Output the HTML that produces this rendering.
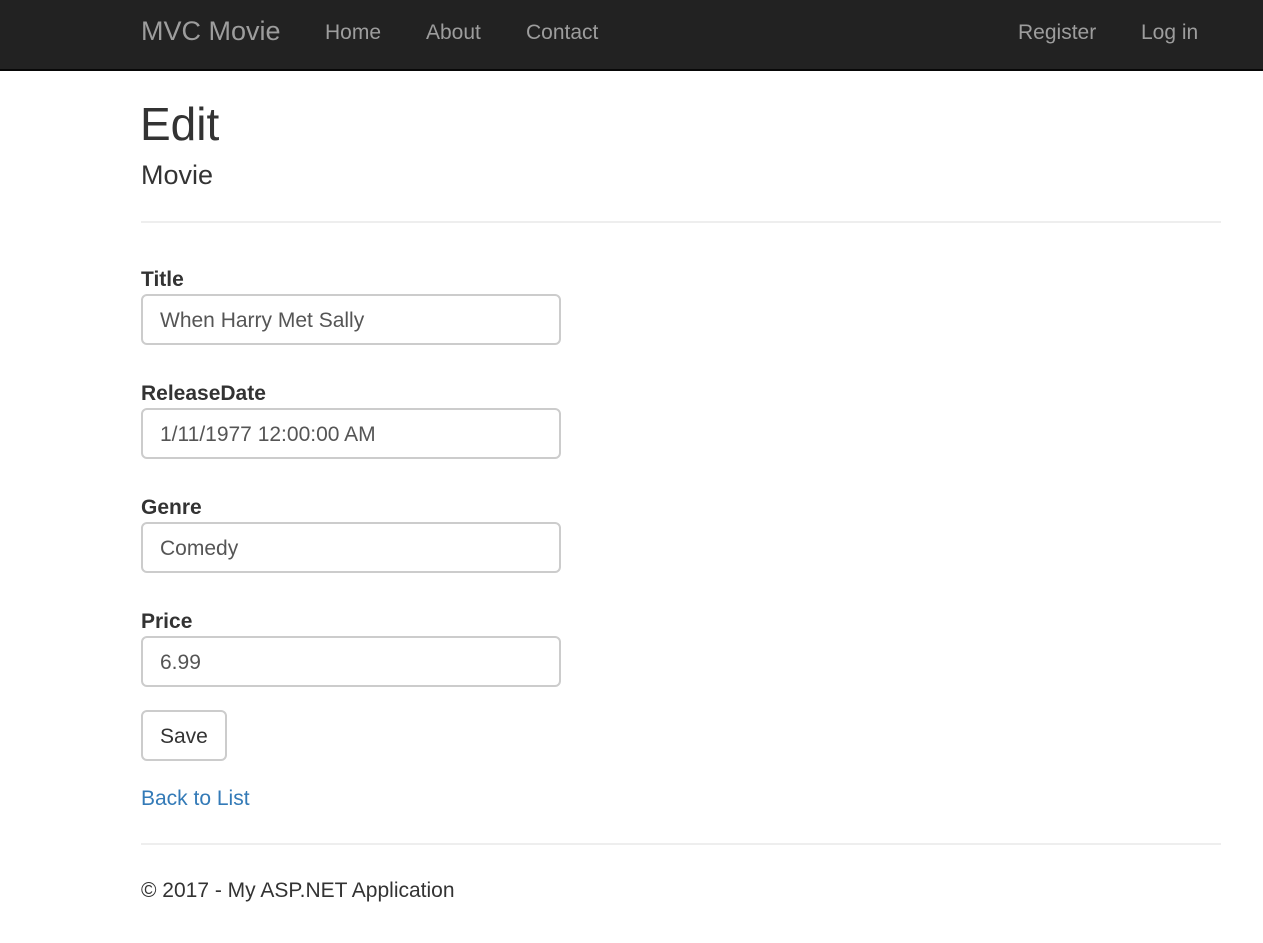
<!DOCTYPE html>
<html><head><meta charset="utf-8"><style>
body{margin:0;width:1263px;height:943px;background:#fff;font-family:"Liberation Sans",Arial,sans-serif;color:#333;position:relative;overflow:hidden}
.a{position:absolute;line-height:1;white-space:nowrap}
.nav{position:absolute;left:0;top:0;width:1263px;height:69px;background:#222;border-bottom:2px solid #080808}
.nl{font-size:21px;color:#9d9d9d;top:21.5px}
.lbl{font-size:21px;font-weight:bold;left:141px}
.inp{position:absolute;left:141px;width:416px;height:47px;border:2px solid #ccc;border-radius:6px;box-sizing:content-box}
.inp span{position:absolute;left:17px;top:13.5px;font-size:21px;line-height:1;color:#555}
.hr{position:absolute;left:141px;width:1080px;height:2px;background:#eee}
</style></head><body>
<div class="nav"></div>
<div class="a" style="left:141px;top:17.5px;font-size:27px;color:#9d9d9d">MVC Movie</div>
<div class="a nl" style="left:325px">Home</div>
<div class="a nl" style="left:426px">About</div>
<div class="a nl" style="left:526px">Contact</div>
<div class="a nl" style="left:1018px">Register</div>
<div class="a nl" style="left:1141px">Log in</div>

<div class="a" style="left:140px;top:100.5px;font-size:46px">Edit</div>
<div class="a" style="left:141px;top:162px;font-size:27px">Movie</div>
<div class="hr" style="top:221px"></div>

<div class="a lbl" style="top:268.5px">Title</div>
<div class="inp" style="top:294px"><span>When Harry Met Sally</span></div>
<div class="a lbl" style="top:382.5px">ReleaseDate</div>
<div class="inp" style="top:408px"><span>1/11/1977 12:00:00 AM</span></div>
<div class="a lbl" style="top:496.5px">Genre</div>
<div class="inp" style="top:522px"><span>Comedy</span></div>
<div class="a lbl" style="top:610.5px">Price</div>
<div class="inp" style="top:636px"><span>6.99</span></div>

<div class="inp" style="top:710px;width:82px"><span style="color:#333;left:17px">Save</span></div>
<div class="a" style="left:141px;top:787.5px;font-size:21px;color:#337ab7">Back to List</div>
<div class="hr" style="top:843px"></div>
<div class="a" style="left:141px;top:879.5px;font-size:21px">© 2017 - My ASP.NET Application</div>
</body></html>
